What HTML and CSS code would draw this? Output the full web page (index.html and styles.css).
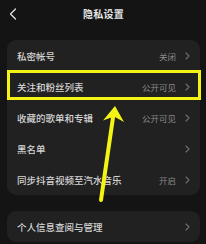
FILE: index.html
```html
<!DOCTYPE html>
<html lang="zh">
<head>
<meta charset="utf-8">
<link rel="stylesheet" href="styles.css">
</head>
<body>
<div class="page">
  <header class="topbar">
    <span class="back">
      <svg width="8" height="12" viewBox="0 0 8 12"><path d="M6.5 1 L1.5 6 L6.5 11" fill="none" stroke="#e0e0e0" stroke-width="1.3" stroke-linecap="round" stroke-linejoin="round"/></svg>
    </span>
    <h1 class="title">隐私设置</h1>
    <span></span>
  </header>

  <section class="card">
    <div class="row"><span class="label">私密帐号</span><span class="value">关闭</span><svg class="chev" width="5" height="8" viewBox="0 0 5 8"><path d="M1 1 L4 4 L1 7" fill="none" stroke="#6f6f6f" stroke-width="1.1" stroke-linecap="round" stroke-linejoin="round"/></svg></div>
    <div class="row highlighted"><span class="label">关注和粉丝列表</span><span class="value">公开可见</span><svg class="chev" width="5" height="8" viewBox="0 0 5 8"><path d="M1 1 L4 4 L1 7" fill="none" stroke="#6f6f6f" stroke-width="1.1" stroke-linecap="round" stroke-linejoin="round"/></svg><span class="mark"></span></div>
    <div class="row"><span class="label">收藏的歌单和专辑</span><span class="value">公开可见</span><svg class="chev" width="5" height="8" viewBox="0 0 5 8"><path d="M1 1 L4 4 L1 7" fill="none" stroke="#6f6f6f" stroke-width="1.1" stroke-linecap="round" stroke-linejoin="round"/></svg></div>
    <div class="row"><span class="label">黑名单</span><svg class="chev" width="5" height="8" viewBox="0 0 5 8"><path d="M1 1 L4 4 L1 7" fill="none" stroke="#6f6f6f" stroke-width="1.1" stroke-linecap="round" stroke-linejoin="round"/></svg></div>
    <div class="row"><span class="label">同步抖音视频至汽水音乐</span><span class="value">开启</span><svg class="chev" width="5" height="8" viewBox="0 0 5 8"><path d="M1 1 L4 4 L1 7" fill="none" stroke="#6f6f6f" stroke-width="1.1" stroke-linecap="round" stroke-linejoin="round"/></svg></div>
  </section>

  <section class="card">
    <div class="row"><span class="label">个人信息查阅与管理</span><svg class="chev" width="5" height="8" viewBox="0 0 5 8"><path d="M1 1 L4 4 L1 7" fill="none" stroke="#6f6f6f" stroke-width="1.1" stroke-linecap="round" stroke-linejoin="round"/></svg></div>
  </section>
</div>

<svg class="arrow" width="206" height="244" viewBox="0 0 206 244">
  <line x1="113.5" y1="114" x2="101" y2="200" stroke="#f4f414" stroke-width="4" stroke-linecap="round"/>
  <polygon points="115,106 124,122 114,116.5 103,120.5" fill="#f4f414"/>
</svg>
</body>
</html>
```
FILE: styles.css
```css
html, body {
  margin: 0;
  padding: 0;
  background: #141414;
}
body {
  width: 206px;
  height: 244px;
  overflow: hidden;
  position: relative;
  font-family: "Noto Sans CJK SC", "Noto Sans", sans-serif;
}
.page {
  padding: 0 6px 0 7px;
}
.topbar {
  height: 26px;
  display: grid;
  grid-template-columns: 1fr auto 1fr;
  align-items: center;
}
.back {
  display: flex;
  padding-left: 2px;
  padding-top: 1px;
}
.title {
  margin: 0;
  font-size: 10px;
  font-weight: 700;
  color: #e4e4e4;
  letter-spacing: 0.3px;
}
.card {
  margin-top: 14px;
  background: #212121;
  border-radius: 9px;
}
.card + .card {
  margin-top: 16px;
}
.row {
  height: 31px;
  display: flex;
  align-items: center;
  padding: 0 10px;
  position: relative;
}
.label {
  flex: 1;
  font-size: 9.5px;
  font-weight: 500;
  color: #d4d4d4;
}
.value {
  font-size: 8.5px;
  color: #8a8a8a;
  margin-right: 9px;
}
.chev {
  display: block;
}
.mark {
  position: absolute;
  left: 0;
  right: -1px;
  top: -1px;
  bottom: 2px;
  border: 3.5px solid #f4f414;
  pointer-events: none;
}
.arrow {
  position: absolute;
  left: 0;
  top: 0;
  pointer-events: none;
}
```
